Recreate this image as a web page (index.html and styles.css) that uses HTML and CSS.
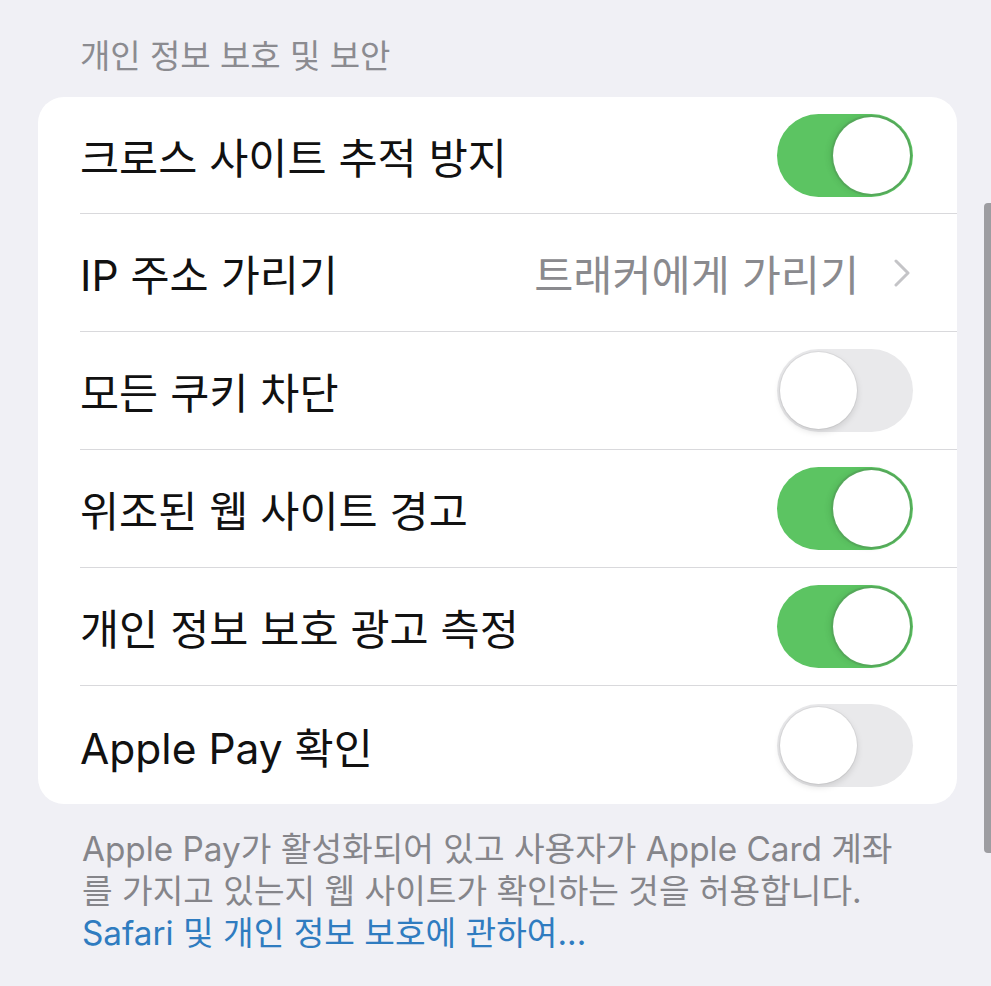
FILE: index.html
```html
<html>
<head>
<title>Safari 설정</title>
<link rel="stylesheet" href="styles.css">
</head>
<body>
<div class="section">
  <h2 class="section-title">개인 정보 보호 및 보안</h2>

  <div class="card">
    <div class="row">
      <div class="row-body">
        <span class="label">크로스 사이트 추적 방지</span>
        <span class="toggle on"><span class="knob"></span></span>
      </div>
    </div>

    <div class="row">
      <div class="row-body">
        <span class="label">IP 주소 가리기</span>
        <span class="detail">트래커에게 가리기
          <svg class="chevron" width="20" height="28" viewBox="0 0 20 28"><polyline points="4,2 16,14 4,26" fill="none" stroke="#c4c4c7" stroke-width="3" stroke-linecap="round" stroke-linejoin="round"/></svg>
        </span>
      </div>
    </div>

    <div class="row">
      <div class="row-body">
        <span class="label">모든 쿠키 차단</span>
        <span class="toggle"><span class="knob"></span></span>
      </div>
    </div>

    <div class="row">
      <div class="row-body">
        <span class="label">위조된 웹 사이트 경고</span>
        <span class="toggle on"><span class="knob"></span></span>
      </div>
    </div>

    <div class="row">
      <div class="row-body">
        <span class="label">개인 정보 보호 광고 측정</span>
        <span class="toggle on"><span class="knob"></span></span>
      </div>
    </div>

    <div class="row">
      <div class="row-body">
        <span class="label">Apple Pay 확인</span>
        <span class="toggle"><span class="knob"></span></span>
      </div>
    </div>
  </div>

  <p class="footer">Apple Pay가 활성화되어 있고 사용자가 Apple Card 계좌<br>를 가지고 있는지 웹 사이트가 확인하는 것을 허용합니다.<br><a href="#" class="link">Safari 및 개인 정보 보호에 관하여...</a></p>
</div>

<div class="scrollbar"></div>
</body>
</html>
```

FILE: styles.css
```css
html, body {
  margin: 0;
  padding: 0;
}
body {
  background: #f0f0f5;
  font-family: Inter, "Noto Sans CJK KR", sans-serif;
  color: #111;
  overflow: hidden;
}
.section {
  padding: 36px 34px 0 38px;
}
.section-title {
  margin: 0 0 21px 0;
  padding-left: 42px;
  font-size: 33px;
  line-height: 40px;
  font-weight: 400;
  color: #8b8b90;
}
.card {
  background: #fff;
  border-radius: 26px;
  overflow: hidden;
}
.row {
  padding-left: 42px;
}
.row-body {
  box-sizing: border-box;
  height: 118px;
  padding-right: 44px;
  display: flex;
  align-items: center;
  justify-content: space-between;
  border-bottom: 1px solid #d9d9dc;
}
.row:first-child .row-body {
  height: 117px;
}
.row:last-child .row-body {
  border-bottom: 0;
}
.label {
  font-size: 42.5px;
  color: #111;
}
.detail {
  display: flex;
  align-items: center;
  gap: 33px;
  font-size: 42.5px;
  color: #8a8a8e;
}
.chevron {
  margin-right: 1px;
}
.toggle {
  position: relative;
  width: 136px;
  height: 83px;
  border-radius: 42px;
  background: #e9e9eb;
}
.toggle .knob {
  position: absolute;
  top: 3px;
  left: 3px;
  width: 77px;
  height: 77px;
  border-radius: 50%;
  background: #fff;
  box-shadow: 0 3px 7px rgba(0,0,0,.13), 0 0 0 1px rgba(0,0,0,.05);
}
.toggle.on {
  background: #5cc462;
}
.toggle.on .knob {
  left: auto;
  right: 3px;
  box-shadow: 0 0 0 2px #55a85a, -3px 0 6px rgba(0,60,0,.12);
}
.footer {
  margin: 24px 0 0 0;
  padding-left: 44px;
  font-size: 33.3px;
  line-height: 42px;
  color: #85858a;
}
.link {
  color: #2f7cc0;
  text-decoration: none;
}
.scrollbar {
  position: absolute;
  top: 203px;
  right: 0;
  width: 7px;
  height: 650px;
  border-radius: 4px 0 0 4px;
  background: #9d9da1;
}
```
